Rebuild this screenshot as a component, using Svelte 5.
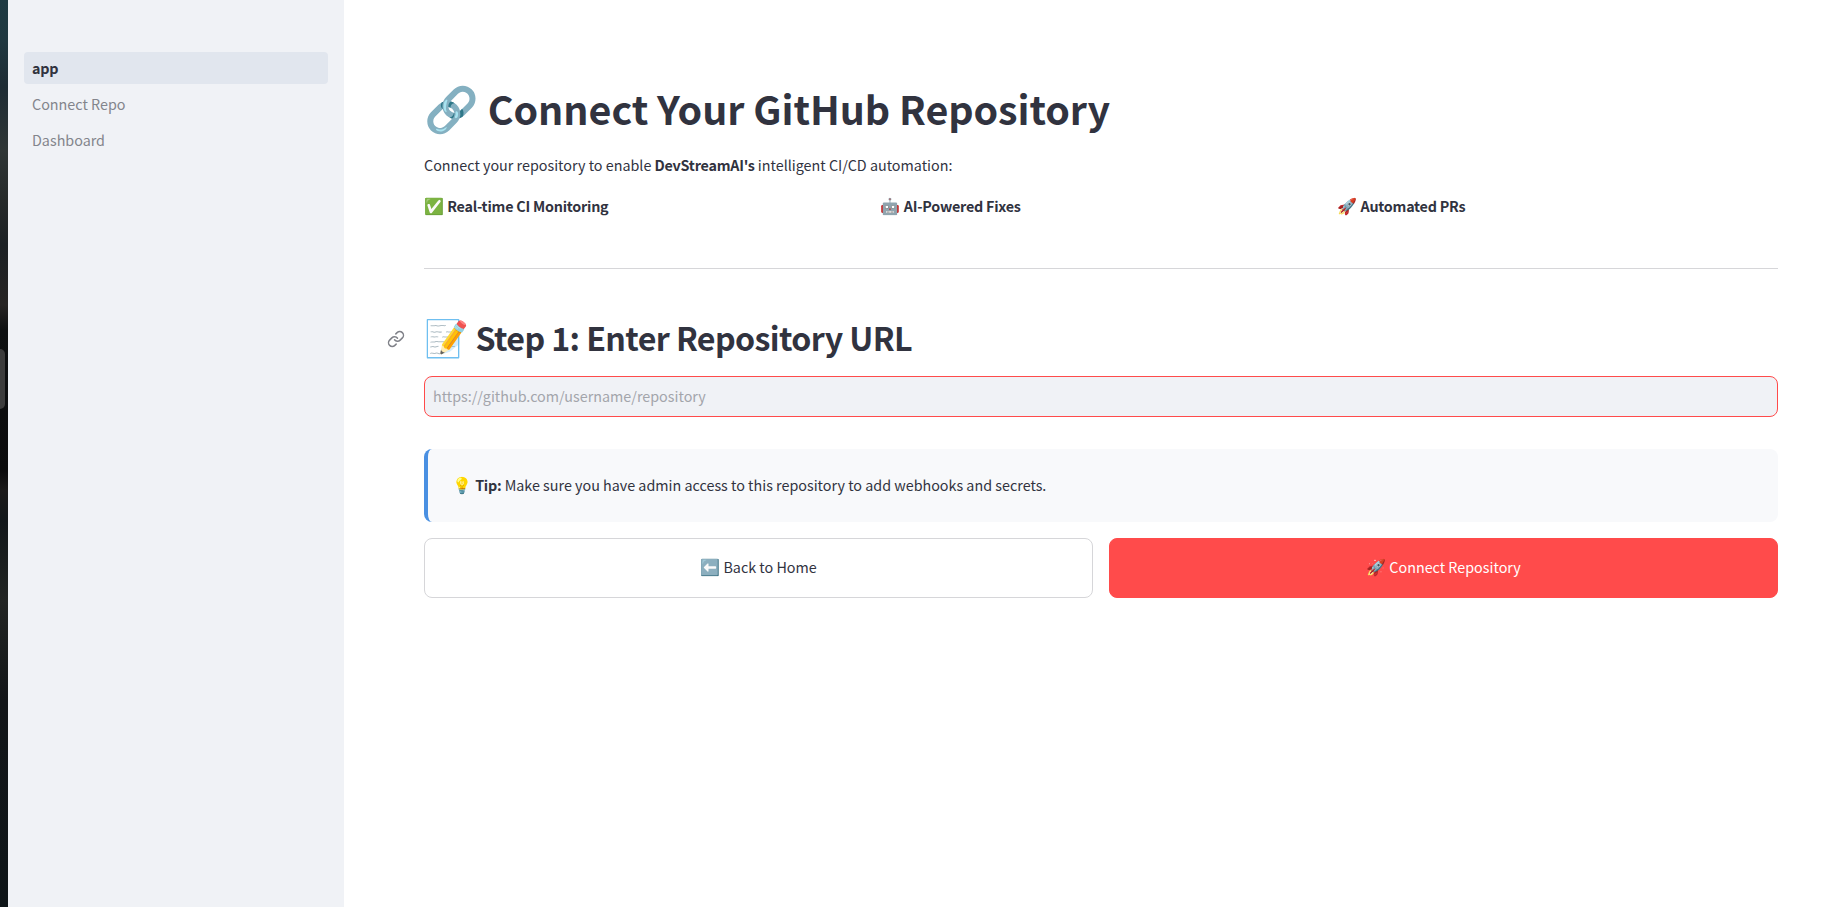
<script lang="ts">
	const pages = ['app', 'Connect Repo', 'Dashboard'];
	const features = [
		{ icon: '✅', label: 'Real-time CI Monitoring' },
		{ icon: '🤖', label: 'AI-Powered Fixes' },
		{ icon: '🚀', label: 'Automated PRs' }
	];

	let current = $state('app');
	let repoUrl = $state('');
</script>

<div class="shell">
	<div class="desktop-edge"><div class="handle"></div></div>

	<aside class="sidebar">
		<nav>
			{#each pages as page (page)}
				<button class="page-link" class:active={current === page} onclick={() => (current = page)}>
					{page}
				</button>
			{/each}
		</nav>
	</aside>

	<main class="main">
		<h1><span class="emoji">🔗</span> Connect Your GitHub Repository</h1>
		<p class="intro">
			Connect your repository to enable <strong>DevStreamAI's</strong> intelligent CI/CD automation:
		</p>

		<div class="features">
			{#each features as feature (feature.label)}
				<p><span class="emoji">{feature.icon}</span> <strong>{feature.label}</strong></p>
			{/each}
		</div>

		<hr />

		<h2>
			<a class="anchor" href="#step-1" aria-label="Link to heading">
				<svg viewBox="0 0 24 24" width="18" height="18">
					<path d="M10 13a5 5 0 0 0 7.54.54l3-3a5 5 0 0 0-7.07-7.07l-1.72 1.71" />
					<path d="M14 11a5 5 0 0 0-7.54-.54l-3 3a5 5 0 0 0 7.07 7.07l1.71-1.71" />
				</svg>
			</a>
			<span class="emoji">📝</span> Step 1: Enter Repository URL
		</h2>

		<input class="url" type="text" placeholder="https://github.com/username/repository" bind:value={repoUrl} />

		<div class="tip">
			<p>
				<span class="emoji">💡</span> <strong>Tip:</strong> Make sure you have admin access to this repository to add webhooks and secrets.
			</p>
		</div>

		<div class="actions">
			<button class="btn"><span class="emoji">⬅️</span> Back to Home</button>
			<button class="btn primary"><span class="emoji">🚀</span> Connect Repository</button>
		</div>
	</main>
</div>

<style>
	:global(body) {
		background: #fff;
		overflow: hidden;
	}

	.shell {
		display: flex;
		height: 100vh;
		font-family: 'Source Sans Pro', 'Noto Sans CJK JP', 'Noto Color Emoji', sans-serif;
		font-size: 14.33px;
		line-height: 25.6px;
		color: #31333f;
	}

	.shell * {
		box-sizing: border-box;
	}

	.desktop-edge {
		flex: none;
		display: flex;
		width: 8px;
		background: linear-gradient(
			#1e3a42 0,
			#203840 40px,
			#1e2c34 87px,
			#2f3636 150px,
			#262a2a 200px,
			#1c2124 245px,
			#262423 305px,
			#0e1011 330px,
			#0b0b0c 470px,
			#1b1a1a 490px,
			#12171a 520px,
			#222523 600px,
			#131619 700px,
			#0e1518 907px
		);
	}

	.handle {
		width: 5px;
		height: 60px;
		margin-top: 349px;
		border-radius: 0 5px 5px 0;
		background: #3c3c3c;
	}

	.sidebar {
		flex: none;
		width: 336px;
		padding: 52px 16px 0;
		background: #f0f2f6;
	}

	nav {
		display: flex;
		flex-direction: column;
		gap: 4px;
	}

	.page-link {
		height: 32px;
		padding: 0 8px;
		border: none;
		border-radius: 4px;
		background: none;
		font: inherit;
		line-height: 32px;
		text-align: left;
		color: #83858c;
		cursor: pointer;
	}

	.page-link.active {
		background: #e1e6ee;
		font-weight: 600;
		letter-spacing: -0.2px;
		color: #31333f;
	}

	.main {
		flex: 1;
		min-width: 0;
		padding: 77px 69px 0 80px;
	}

	h1,
	h2,
	p {
		margin: 0;
	}

	h1 {
		height: 61px;
		font-size: 39.4px;
		font-weight: 700;
		line-height: 61px;
		letter-spacing: -0.04px;
		white-space: nowrap;
	}

	.emoji {
		font-size: 16px;
		line-height: 1;
		letter-spacing: 0;
	}

	h1 .emoji {
		font-size: 44px;
	}

	h2 .emoji {
		font-size: 36px;
	}

	.intro {
		margin-top: 14px;
	}

	strong {
		font-weight: 600;
		letter-spacing: -0.23px;
	}

	.features {
		display: grid;
		grid-template-columns: repeat(3, 1fr);
		gap: 16px;
		margin-top: 15px;
	}

	hr {
		height: 1px;
		margin: 50px 0 47px;
		border: none;
		background: #d6d6d9;
	}

	h2 {
		position: relative;
		height: 43px;
		font-size: 32.2px;
		font-weight: 600;
		line-height: 43px;
		letter-spacing: -0.61px;
		white-space: nowrap;
	}

	.anchor {
		position: absolute;
		left: -37px;
		top: 14px;
		line-height: 0;
	}

	.anchor svg {
		fill: none;
		stroke: #808289;
		stroke-width: 2;
		stroke-linecap: round;
		stroke-linejoin: round;
	}

	.url {
		display: block;
		width: 100%;
		height: 41px;
		margin-top: 17px;
		padding: 0 8px 2px;
		border: 1px solid #ff4b4b;
		border-radius: 8px;
		outline: none;
		background: #f0f2f6;
		font: inherit;
		color: inherit;
	}

	.url::placeholder {
		color: #a3a5ab;
	}

	.tip {
		height: 73px;
		margin-top: 32px;
		padding: 23px 24px;
		border-left: 4px solid #4a90e2;
		border-radius: 8px;
		background: #f8f9fb;
	}

	.actions {
		display: grid;
		grid-template-columns: 1fr 1fr;
		gap: 16px;
		margin-top: 16px;
	}

	.btn {
		height: 60px;
		padding: 0 0 3px;
		border: 1px solid #d6d6d9;
		border-radius: 8px;
		background: #fff;
		font: inherit;
		color: inherit;
		cursor: pointer;
	}

	.btn.primary {
		border-color: #ff4b4b;
		background: #ff4b4b;
		color: #fff;
	}
</style>
